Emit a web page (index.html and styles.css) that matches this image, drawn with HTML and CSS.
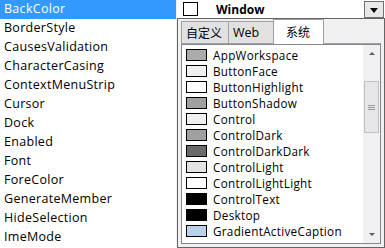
FILE: index.html
```html
<!DOCTYPE html>
<html lang="zh-CN">
<head>
    <meta charset="UTF-8">
    <title>Properties</title>
    <link rel="stylesheet" href="styles.css">
</head>
<body>
    <div class="grid">
        <!-- property names -->
        <div class="names">
            <div class="name selected">BackColor</div>
            <div class="name">BorderStyle</div>
            <div class="name">CausesValidation</div>
            <div class="name">CharacterCasing</div>
            <div class="name">ContextMenuStrip</div>
            <div class="name">Cursor</div>
            <div class="name">Dock</div>
            <div class="name">Enabled</div>
            <div class="name">Font</div>
            <div class="name">ForeColor</div>
            <div class="name">GenerateMember</div>
            <div class="name">HideSelection</div>
            <div class="name">ImeMode</div>
        </div>

        <!-- value column -->
        <div class="values">
            <div class="value-row">
                <span class="swatch big"></span>
                <span class="value-text">Window</span>
                <span class="drop-btn"><span class="arrow"></span></span>
            </div>
        </div>
    </div>

    <!-- colour picker dropdown -->
    <div class="popup">
        <div class="tabs">
            <div class="tab">自定义</div>
            <div class="tab">Web</div>
            <div class="tab active">系统</div>
        </div>
        <div class="listbox">
            <ul class="colors">
                <li><span class="swatch" style="background:#ababab"></span>AppWorkspace</li>
                <li><span class="swatch" style="background:#f0f0f0"></span>ButtonFace</li>
                <li><span class="swatch" style="background:#ffffff"></span>ButtonHighlight</li>
                <li><span class="swatch" style="background:#a0a0a0"></span>ButtonShadow</li>
                <li><span class="swatch" style="background:#f0f0f0"></span>Control</li>
                <li><span class="swatch" style="background:#a0a0a0"></span>ControlDark</li>
                <li><span class="swatch" style="background:#696969"></span>ControlDarkDark</li>
                <li><span class="swatch" style="background:#e3e3e3"></span>ControlLight</li>
                <li><span class="swatch" style="background:#ffffff"></span>ControlLightLight</li>
                <li><span class="swatch" style="background:#000000"></span>ControlText</li>
                <li><span class="swatch" style="background:#000000"></span>Desktop</li>
                <li><span class="swatch" style="background:#b9d1ea"></span>GradientActiveCaption</li>
            </ul>
            <div class="scrollbar">
                <div class="sb-arrow up"></div>
                <div class="sb-track">
                    <div class="sb-thumb">
                        <span></span><span></span><span></span>
                    </div>
                </div>
                <div class="sb-arrow down"></div>
            </div>
        </div>
    </div>
</body>
</html>
```

FILE: styles.css
```css
body {
    margin: 0;
    width: 385px;
    height: 248px;
    overflow: hidden;
    background: #ffffff;
    font-family: "Open Sans", "Noto Sans CJK SC", sans-serif;
    font-size: 12px;
    color: #000000;
    position: relative;
}
.grid {
    display: flex;
}
.names {
    width: 176px;
    border-right: 1px solid #f0f0f0;
    font-size: 12.5px;
    letter-spacing: 0.3px;
}
.name {
    height: 19px;
    line-height: 18px;
    padding-left: 4px;
    white-space: nowrap;
}
.name.selected {
    background-color: #3399ff;
    color: #ffffff;
}
.values {
    flex: 1;
}
.value-row {
    height: 18px;
    display: flex;
    align-items: center;
    padding-left: 6px;
}
.swatch {
    display: inline-block;
    box-sizing: border-box;
    width: 21px;
    height: 12px;
    border: 1px solid #000000;
    margin-right: 6px;
    vertical-align: middle;
}
.swatch.big {
    width: 15px;
    height: 14px;
    background: #ffffff;
    margin-right: 18px;
}
.value-text {
    font-weight: bold;
    flex: 1;
}
.drop-btn {
    box-sizing: border-box;
    width: 20px;
    height: 17px;
    margin-right: 1px;
    border: 1px solid #707070;
    background: #e8e8e8;
    display: flex;
    align-items: center;
    justify-content: center;
}
.arrow {
    width: 0;
    height: 0;
    border-left: 4px solid transparent;
    border-right: 4px solid transparent;
    border-top: 5px solid #000000;
    margin-top: 2px;
}

/* Dropdown popup */
.popup {
    position: absolute;
    left: 177px;
    top: 18px;
    width: 208px;
    height: 230px;
    box-sizing: border-box;
    border: 1px solid #646464;
    background: #f0f0f0;
    padding: 1px 3px 3px 3px;
}
.tabs {
    display: flex;
    height: 24px;
    box-sizing: border-box;
    align-items: flex-end;
    border-bottom: 1px solid #a0a0a0;
    font-family: "Noto Sans CJK SC", sans-serif;
}
.tab {
    height: 22px;
    line-height: 21px;
    box-sizing: border-box;
    padding: 0 4px;
    border: 1px solid #a0a0a0;
    border-bottom: none;
    background: #e1e1e1;
    margin-right: -1px;
}
.tab:nth-child(1) { width: 48px; }
.tab:nth-child(2) {
    width: 46px;
    font-family: "Open Sans", sans-serif;
    font-size: 12.5px;
}
.tab.active {
    width: 51px;
    height: 25px;
    line-height: 23px;
    background: #ffffff;
    padding-left: 12px;
    margin-bottom: -1px;
}
.listbox {
    display: flex;
    height: 200px;
    box-sizing: border-box;
    border: 1px solid #828790;
    background: #ffffff;
}
.colors {
    flex: 1;
    list-style: none;
    margin: 0;
    padding: 2px 0 0 4px;
    overflow: hidden;
    font-size: 11.7px;
    letter-spacing: 0.3px;
}
.colors li {
    height: 16px;
    line-height: 16px;
    white-space: nowrap;
    display: flex;
    align-items: center;
}
.scrollbar {
    width: 17px;
    display: flex;
    flex-direction: column;
    background: #f0f0f0;
}
.sb-arrow {
    height: 17px;
    display: flex;
    align-items: center;
    justify-content: center;
}
.sb-arrow::after {
    content: "";
    border-left: 3px solid transparent;
    border-right: 3px solid transparent;
}
.sb-arrow.up::after {
    border-bottom: 3px solid #606060;
}
.sb-arrow.down::after {
    border-top: 3px solid #606060;
}
.sb-track {
    flex: 1;
    padding-top: 19px;
}
.sb-thumb {
    height: 52px;
    margin: 0 1px;
    box-sizing: border-box;
    border: 1px solid #c2c2c2;
    background: #e6e6e6;
    display: flex;
    flex-direction: column;
    justify-content: center;
    align-items: center;
    gap: 1px;
}
.sb-thumb span {
    width: 7px;
    height: 1px;
    background: #999999;
}
```
